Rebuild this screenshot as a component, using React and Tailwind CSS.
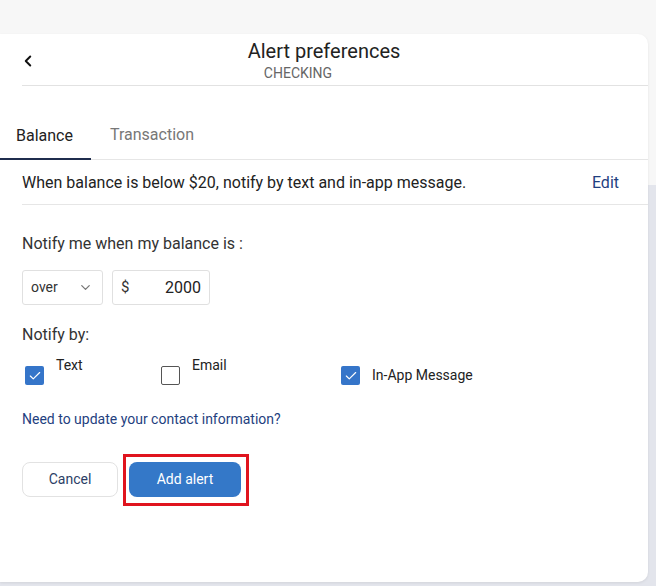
import { ChevronLeft, ChevronDown, Check } from "lucide-react";

const FONT = { fontFamily: "Roboto, 'Liberation Sans', sans-serif" };

function Box({ checked }) {
    return checked ? (
        <span className="w-[19px] h-[19px] rounded-[2px] bg-[#3575c9] flex items-center justify-center shrink-0">
            <Check size={14} strokeWidth={2} className="text-white" />
        </span>
    ) : (
        <span className="w-[19px] h-[19px] rounded-[2px] border-[1.5px] border-[#555] bg-white shrink-0" />
    );
}

export default function App() {
    return (
        <div
            className="w-[656px] h-[586px] overflow-hidden bg-[linear-gradient(to_bottom,#f7f7f7_185px,#e3e5ec_185px)]"
            style={FONT}
        >
            <div className="pt-[34px] flex">
                <div className="w-[648px] h-[548px] bg-white rounded-r-[10px] shadow-[0_1px_3px_rgba(0,0,0,0.08)]">
                    {/* Header */}
                    <div className="relative h-[52px] ml-[22px] border-b border-[#e2e2e2]">
                        <ChevronLeft size={18} strokeWidth={2.6} className="absolute left-[-3px] top-[18px] text-[#111]" />
                        <div className="flex flex-col items-center pr-[22px]">
                            <h1 className="text-[20px] leading-[24px] text-[#222] pt-[5px]">Alert preferences</h1>
                            <p className="mt-[2px] mr-[52px] text-[14px] leading-[16px] text-[#666]">CHECKING</p>
                        </div>
                    </div>

                    {/* Tabs */}
                    <div className="h-[74px] flex items-end border-b border-[#e6e6e6]">
                        <button className="pl-[16px] pr-[18px] pb-[12px] text-[16px] leading-[20px] text-[#222] border-b-2 border-[#1f2d4d] -mb-px">
                            Balance
                        </button>
                        <button className="ml-[19px] pb-[14px] text-[16px] leading-[20px] text-[#777]">
                            Transaction
                        </button>
                    </div>

                    {/* Summary */}
                    <div className="ml-[22px] h-[45px] flex items-center justify-between pr-[29px] border-b border-[#e6e6e6]">
                        <p className="pt-[2px] text-[16px] text-[#222]">When balance is below $20, notify by text and in-app message.</p>
                        <button className="pt-[2px] text-[16px] text-[#1f3f7f]">Edit</button>
                    </div>

                    <div className="px-[22px]">
                        <p className="mt-[29px] text-[16px] leading-[20px] text-[#333]">Notify me when my balance is :</p>

                        <div className="mt-[16px] flex gap-[9px]">
                            <div className="w-[81px] h-[35px] border border-[#e0e0e0] rounded-[3px] flex items-center justify-between pl-[8px] pr-[9px]">
                                <span className="text-[14px] text-[#333]">over</span>
                                <ChevronDown size={15} className="text-[#777]" />
                            </div>
                            <div className="w-[98px] h-[35px] border border-[#e0e0e0] rounded-[3px] flex items-center justify-between pl-[8px] pr-[8px]">
                                <span className="text-[15px] text-[#333]">$</span>
                                <span className="text-[16px] text-[#222]">2000</span>
                            </div>
                        </div>

                        <p className="mt-[20px] text-[16px] leading-[20px] text-[#333]">Notify by:</p>

                        <div className="mt-[10px] h-[30px] flex">
                            <div className="w-[139px] flex items-end pl-[3px]">
                                <Box checked />
                                <span className="ml-[12px] self-start text-[14px] text-[#222]">Text</span>
                            </div>
                            <div className="w-[180px] flex items-end">
                                <Box />
                                <span className="ml-[12px] self-start text-[14px] text-[#222]">Email</span>
                            </div>
                            <div className="flex items-end">
                                <Box checked />
                                <span className="ml-[12px] text-[14px] leading-[20px] text-[#222]">In-App Message</span>
                            </div>
                        </div>

                        <a className="block mt-[24px] text-[14px] leading-[20px] text-[#1f3f7f]">Need to update your contact information?</a>

                        <div className="mt-[33px] flex items-start gap-[5px]">
                            <button className="w-[96px] h-[35px] rounded-[8px] border border-[#e2e2e2] text-[14px] text-[#2c3e66] bg-white">
                                Cancel
                            </button>
                            <div className="-mt-[8px] border-[3px] border-[#e0141e] pt-[5px] pb-[6px] pl-[3px] pr-[5px]">
                                <button className="w-[112px] h-[35px] rounded-[8px] bg-[#3478c8] text-[14px] text-white block">
                                    Add alert
                                </button>
                            </div>
                        </div>
                    </div>
                </div>
            </div>
        </div>
    );
}
